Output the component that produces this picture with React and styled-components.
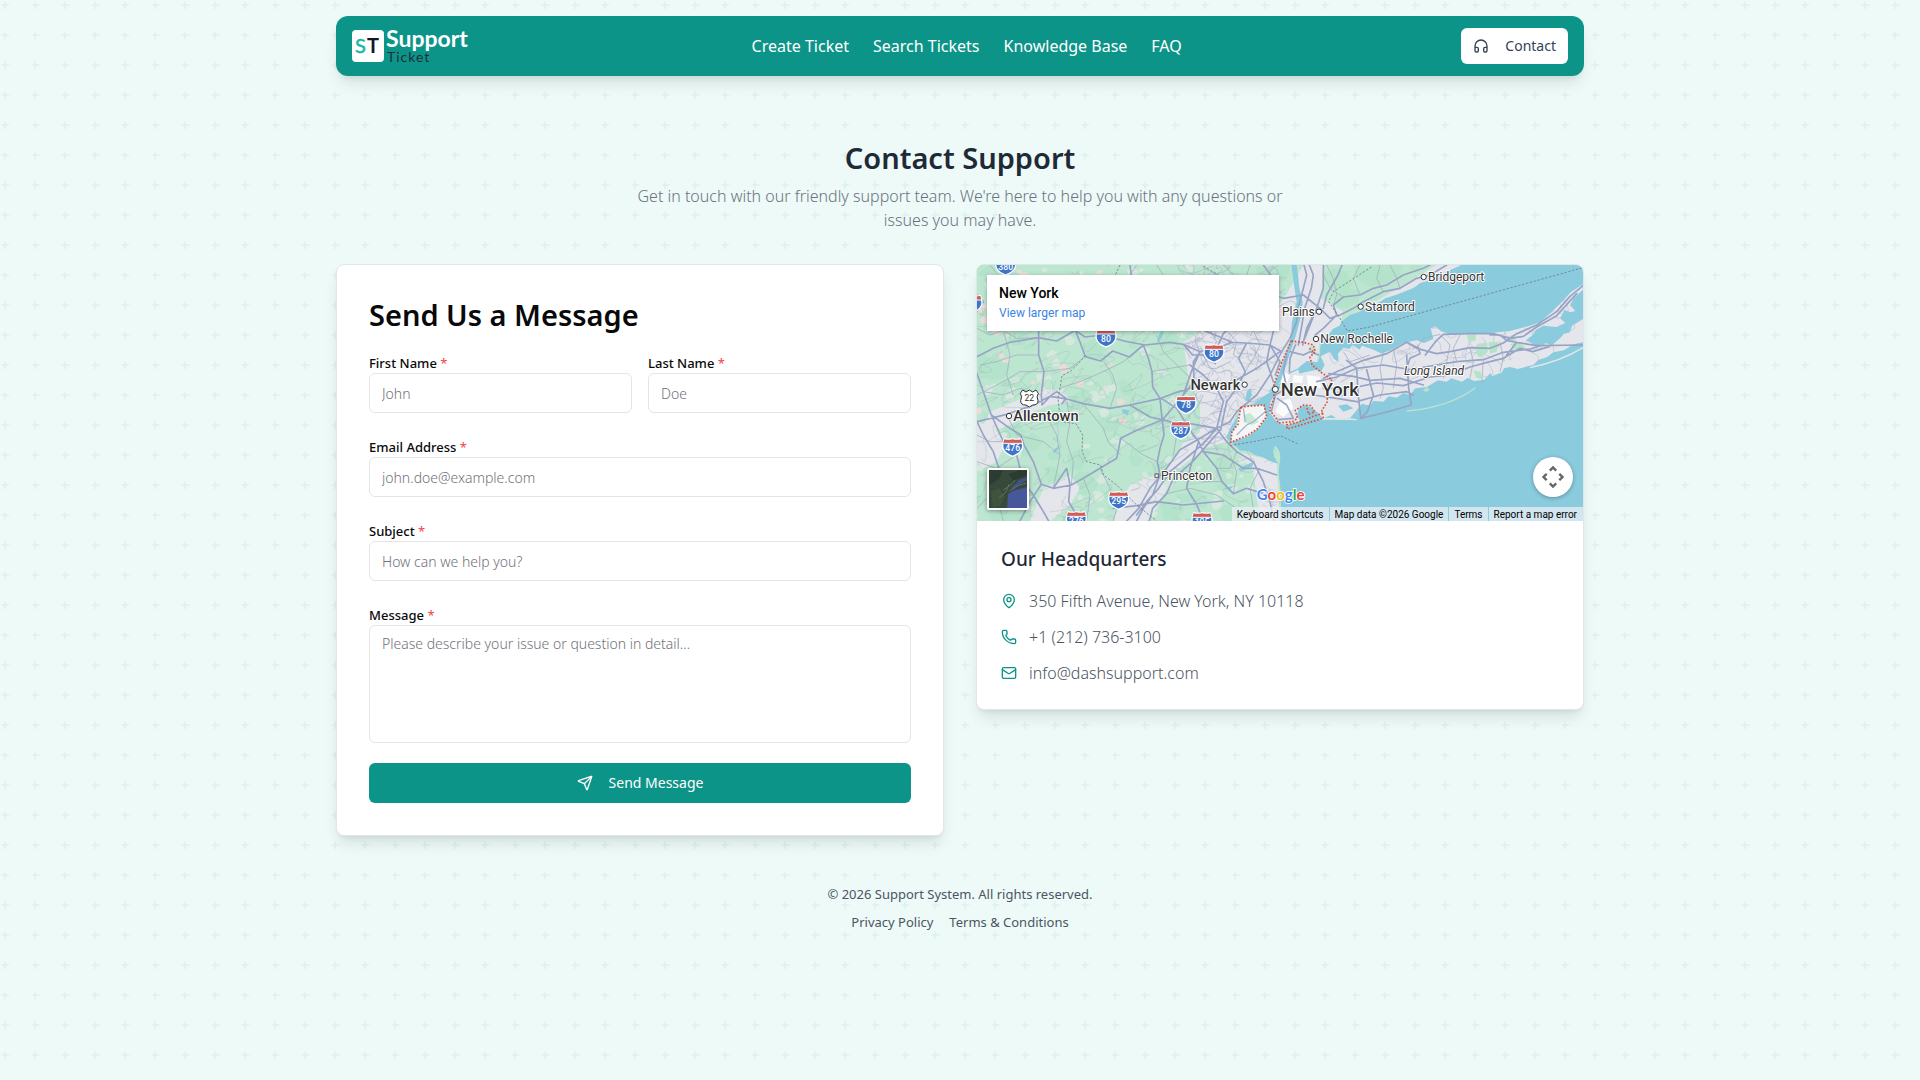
import styled, { createGlobalStyle } from "styled-components"
import { Headphones, Mail, MapPin, Phone, Send } from "lucide-react"

const plus = encodeURIComponent(
  `<svg xmlns="http://www.w3.org/2000/svg" width="30" height="30"><path d="M1 5h9M5 1v9" stroke="#0d9488" stroke-opacity="0.03" stroke-width="2"/><path d="M3 5h5M5 3v5" stroke="#0d9488" stroke-opacity="0.03" stroke-width="2"/></svg>`
)

const GlobalStyle = createGlobalStyle`
    *, *::before, *::after {
        box-sizing: border-box;
    }

    body {
        margin: 0;
        min-height: 100vh;
        font-family: "Noto Sans", "Open Sans", sans-serif;
        font-size: 16px;
        line-height: 24px;
        color: #09090b;
        background: #edfaf8 url("data:image/svg+xml,${plus}");
    }

    h1, h2, h3, p {
        margin: 0;
    }

    a {
        color: inherit;
        text-decoration: none;
    }

    button, input, textarea {
        font: inherit;
    }
`

const Container = styled.div`
    max-width: 1280px;
    margin: 0 auto;
    padding: 16px;
`

const Header = styled.header`
    display: flex;
    align-items: center;
    justify-content: space-between;
    height: 60px;
    padding: 0 16px;
    border-radius: 12px;
    background-color: #0d9488;
    box-shadow: 0 10px 15px -3px rgba(0, 0, 0, 0.1), 0 4px 6px -4px rgba(0, 0, 0, 0.1);
`

const Logo = styled.a`
    display: flex;

    svg {
        overflow: visible;
    }
`

const Nav = styled.nav`
    display: flex;
    gap: 24px;
    color: #fff;
`

const ContactButton = styled.button`
    display: flex;
    align-items: center;
    gap: 16px;
    height: 36px;
    padding: 0 12px;
    border: 0;
    border-radius: 6px;
    background-color: #fff;
    color: #334155;
    font-size: 14px;
    cursor: pointer;
`

const Intro = styled.section`
    max-width: 672px;
    margin: 64px auto 32px;
    text-align: center;
    color: #6b7280;
    font-weight: 300;
`

const PageTitle = styled.h1`
    margin-bottom: 8px;
    font-size: 29px;
    line-height: 36px;
    font-weight: 600;
    color: #1f2937;
`

const Columns = styled.main`
    display: grid;
    grid-template-columns: repeat(2, minmax(0, 1fr));
    align-items: start;
    gap: 32px;
`

const Card = styled.section`
    overflow: hidden;
    border: 1px solid #e0e7e9;
    border-radius: 8px;
    background-color: #fff;
    box-shadow: 0 10px 15px -3px rgba(0, 0, 0, 0.1), 0 4px 6px -4px rgba(0, 0, 0, 0.1);
`

const Form = styled.form`
    display: grid;
    grid-template-columns: repeat(2, minmax(0, 1fr));
    gap: 24px 16px;
    padding: 32px;
`

const FormTitle = styled.h2`
    grid-column: 1 / -1;
    margin-bottom: -4px;
    font-size: 29px;
    line-height: 36px;
    font-weight: 600;
`

const Field = styled.div`
    grid-column: ${props => props.$wide && "1 / -1"};
    display: flex;
    flex-direction: column;
    font-size: 14px;
    line-height: 20px;
`

const Label = styled.label`
    font-size: 13px;
    font-weight: 500;
`

const Required = styled.span`
    font-weight: 400;
    color: #ef4444;
`

const Input = styled.input`
    width: 100%;
    height: ${props => props.as === "textarea" ? "118px" : "40px"};
    padding: 8px 12px;
    border: 1px solid #e4e4e7;
    border-radius: 6px;
    background-color: #fff;
    resize: none;

    &::placeholder {
        color: #71717a;
        font-weight: 300;
        opacity: 1;
    }
`

const SubmitButton = styled.button`
    grid-column: 1 / -1;
    display: flex;
    align-items: center;
    justify-content: center;
    gap: 16px;
    height: 40px;
    margin-top: -4px;
    border: 0;
    border-radius: 6px;
    background-color: #0d9488;
    color: #fff;
    font-size: 14px;
    cursor: pointer;
`

const MapFrame = styled.div`
    position: relative;
    height: 256px;
    overflow: hidden;
    font-family: Roboto, sans-serif;
`

const MapDrawing = styled.svg`
    display: block;
    width: 100%;
    height: 100%;
`

const PlaceCard = styled.div`
    position: absolute;
    top: 10px;
    left: 10px;
    width: 292px;
    padding: 8px 12px;
    background-color: #fff;
    box-shadow: 0 1px 4px rgba(0, 0, 0, 0.3);
    font-size: 14px;
    font-weight: 500;
    line-height: 20px;
    color: #000;
`

const LargerMapLink = styled.a`
    display: block;
    font-size: 12px;
    font-weight: 400;
    color: #3a84df;
`

const SatelliteButton = styled.button`
    position: absolute;
    bottom: 11px;
    left: 10px;
    width: 42px;
    height: 42px;
    padding: 0;
    border: 2px solid #fff;
    border-radius: 2px;
    box-shadow: 0 1px 4px rgba(0, 0, 0, 0.4);
    overflow: hidden;
    cursor: pointer;
`

const CameraButton = styled.button`
    position: absolute;
    right: 10px;
    bottom: 24px;
    display: flex;
    align-items: center;
    justify-content: center;
    width: 40px;
    height: 40px;
    padding: 0;
    border: 0;
    border-radius: 50%;
    background-color: #fff;
    box-shadow: 0 1px 4px rgba(0, 0, 0, 0.3);
    cursor: pointer;
`

const Attribution = styled.div`
    position: absolute;
    right: 0;
    bottom: 0;
    display: flex;
    font-size: 10px;
    line-height: 12px;
    color: #000;
`

const AttributionItem = styled.a`
    padding: 2px 5px 0 5px;
    background-color: rgba(235, 239, 245, 0.75);

    & + & {
        margin-left: 1px;
    }

    &:last-child {
        padding-right: 6px;
    }
`

const Office = styled.div`
    padding: 24px;
`

const OfficeTitle = styled.h3`
    margin-bottom: 16px;
    font-size: 19px;
    line-height: 28px;
    font-weight: 500;
    color: #1f2937;
`

const OfficeList = styled.address`
    display: flex;
    flex-direction: column;
    gap: 12px;
    font-style: normal;
    font-weight: 300;
    color: #4b5563;
`

const OfficeRow = styled.div`
    display: flex;
    align-items: center;
    gap: 12px;

    svg {
        color: #0d9488;
    }
`

const Footer = styled.footer`
    display: flex;
    flex-direction: column;
    align-items: center;
    gap: 8px;
    margin-top: 48px;
    font-size: 13px;
    line-height: 20px;
    color: #4b5563;
`

const FooterLinks = styled.div`
    display: flex;
    gap: 16px;
`

const mainland =
  "M0 0H1470V34L1440 46 1412 62 1380 76 1350 84 1330 100 1300 112 1270 122 1245 130 1222 146 1190 158 1168 172 1140 180 1118 198 1108 212 1088 222 1076 240 1062 252 1052 272 1050 300 1044 322 1010 318 985 340 960 350 940 372 918 402 900 412 872 430 850 448 818 452 800 490 780 520 768 548 790 566 810 586 836 588 856 600 880 606 898 618 924 626 912 606 908 580 920 590 930 620 926 650 932 700 934 760 925 820H0Z"
const longIsland =
  "M897 470L902 438 926 404 944 378 958 356 984 344 1012 350 1040 344 1052 352 1064 330 1052 304 1080 290 1092 312 1106 320 1104 296 1120 278 1138 282 1148 270 1168 284 1176 272 1210 284 1236 296 1268 282 1300 264 1340 256 1362 264 1390 252 1382 220 1396 214 1412 228 1440 238 1500 234 1560 234 1620 228 1680 212 1712 200 1746 170 1776 140 1802 112 1839 88V104L1812 128 1800 150 1816 168 1800 172 1784 164 1770 190 1786 204 1760 216 1720 212 1698 224 1688 240 1668 256 1700 274 1730 264 1744 272 1770 250 1782 236 1800 232 1806 212 1839 192V262L1810 268 1782 286 1750 292 1732 306 1706 314 1690 330 1672 334 1644 342 1620 336 1602 340 1596 352 1566 364 1562 354 1542 374 1512 378 1494 368 1476 380 1444 370 1430 380 1404 376 1370 396 1336 400 1320 420 1300 414 1280 428 1256 424 1240 440 1210 438 1200 452 1176 446 1156 470 1140 490 1106 494 1084 480 1060 490 1040 470 1010 450 990 456 980 480 990 498 950 512 920 500Z"

// motorways and trunk roads
const highways = [
  "M21 305L70 280 120 262 205 248 260 258 316 226 345 246 400 240 462 258 525 270 600 262 640 268 690 290 740 280 786 262 830 264 900 270 935 290",
  "M316 226L332 266 346 305 392 318 428 288 478 306 520 270 534 306 546 350 548 396 570 430 574 470 582 540 570 580 562 620 570 660 548 720 520 760 500 798",
  "M21 356L40 410 64 480 100 560 140 600 160 680 190 720 220 770 236 798",
  "M21 500L110 478 190 450 240 424 290 432 340 446 420 460 480 450 572 430 620 412 672 396 720 390 790 380 860 340 930 290",
  "M206 226L206 300 222 350 214 420 216 450 240 424 260 410 288 430 276 446",
  "M480 450L540 486 600 500 660 506 740 520 780 500 800 470 860 420 900 360 935 290",
  "M64 480L120 520 152 540 162 570 190 620 214 688 250 700 304 690 340 670 390 640 440 610 452 550 500 526 578 494 640 420 664 350 690 290",
  "M740 520L700 566 660 600 600 650 566 700 530 740 500 780",
  "M752 524L720 560 668 620 610 670 590 716 548 760 538 798",
  "M740 520L680 556 630 584 590 640 540 700 506 760 470 798",
  "M574 430L620 460 670 540 686 560 700 590 740 640 756 680 790 716 830 700 880 716",
  "M740 520L770 560 800 590 850 620 880 680 900 740 912 798",
  "M686 560L660 640 650 700 680 748 700 798",
  "M660 330L700 360 740 400 760 440 740 520",
  "M690 290L670 320 672 380 640 420",
  "M740 280L760 236 770 226",
  "M830 264L806 310 826 350 800 400 770 440 752 524",
  "M786 262L730 238 700 226",
  "M880 30L902 60 910 120 940 130 1000 120 1050 160 1080 190",
  "M935 290L960 250 980 200 984 160 1000 100 1010 60 1002 30",
  "M900 270L890 320 910 380",
  "M910 230L900 270 930 320 916 360",
  "M1004 250L1020 210 1040 160 1060 100 1060 30",
  "M985 270L994 220 1004 160 1024 100 1030 60 1018 30",
  "M998 270L1010 220 1030 180 1050 160",
  "M1080 190L1110 180 1150 160 1180 140 1240 110 1290 100 1340 70 1380 60 1430 30",
  "M1036 240L1060 220 1100 180 1090 150 1120 126 1170 120 1210 100 1250 90 1300 60 1360 40 1380 30",
  "M1116 30L1104 60 1070 120 1060 160",
  "M950 300L940 350 950 400 916 420 904 470",
  "M960 290L1000 300 1020 290 1046 300",
  "M976 270L960 310 958 350",
  "M1060 370L1100 350 1180 316 1250 296 1310 262 1340 280 1400 296 1440 290 1500 278 1560 280 1600 264 1640 236 1700 210 1760 170 1800 124 1839 92",
  "M1040 380L1100 366 1160 340 1240 330 1320 344 1400 330 1460 320 1540 314 1600 292 1680 282 1720 270",
  "M1060 400L1140 400 1220 384 1300 392 1380 366 1440 360 1500 336 1560 320 1600 310 1650 280 1688 290 1740 274",
  "M1030 420L1100 430 1160 440 1230 420 1310 410 1330 420",
  "M1076 356L1150 364 1200 376 1290 370 1360 390",
  "M1190 344L1210 420 1192 470 1172 490 1240 474 1324 450 1316 400 1310 300",
  "M1130 316L1160 340 1164 410 1172 490",
  "M1310 262L1346 280 1350 296 1320 310 1310 340",
  "M1366 300L1400 256 1420 238 1500 236",
  "M1560 240L1590 240 1610 256 1640 262 1700 272 1839 270",
  "M1500 236L1570 236 1620 250 1660 244 1700 216 1760 182 1820 116",
  "M1640 262L1610 300",
  "M922 430L950 450 970 490 924 494",
  "M21 500L40 540 70 590 90 650 100 690",
  "M214 688L180 740 150 798",
  "M250 700L290 640 300 690 296 740 330 798",
  "M700 590L760 600 820 640 860 640 920 660",
  "M21 120L40 140 20 170",
  "M480 30L484 60",
  "M640 268L668 300 700 300 736 326",
  "M430 760L500 752 560 740 640 750 700 744 760 738",
]

// secondary roads
const roads = [
  "M21 220L60 240 100 226 140 250 206 248",
  "M30 330L80 320 140 300 206 300",
  "M21 420L60 400 100 380 150 350 222 350 300 340 346 305",
  "M40 410L100 420 150 400 214 420",
  "M266 400L330 380 400 350 460 320 478 306",
  "M290 432L300 500 290 560 310 620 304 690",
  "M340 446L400 520 414 560 452 600",
  "M222 470L260 540 270 600 250 700",
  "M110 478L140 540 220 560 270 600",
  "M100 560L60 560 21 540",
  "M140 600L80 640 21 620",
  "M160 680L90 690 40 740 21 760",
  "M190 720L130 720 90 760 100 798",
  "M420 460L440 400 428 360 400 318",
  "M60 30L100 80 160 120",
  "M100 226L120 300 110 360 130 420",
  "M500 30L480 60 M560 30L580 60",
  "M452 550L520 600 562 620",
  "M390 640L420 700 440 760 430 798",
  "M340 670L360 720 350 798",
  "M570 660L640 650 700 680 756 680",
  "M590 716L660 700 740 720 800 760",
  "M546 350L600 340 660 330",
  "M560 240L580 290 620 330 672 380",
  "M600 500L620 540 610 600",
  "M780 600L800 650 790 716",
  "M800 590L780 640 740 640",
  "M870 640L840 700 850 760 830 798",
  "M1070 30L1090 70 1100 120 1090 150",
  "M1170 30L1150 70 1170 120",
  "M1230 30L1220 70 1240 110",
  "M1260 30L1280 70 1290 100",
  "M1120 126L1080 100 1060 60",
  "M1340 280L1360 250 1410 238 1440 270 1430 320 1420 370",
  "M1460 320L1450 280 1470 240",
  "M1500 278L1510 320 1500 370",
  "M1540 314L1536 370 1540 384",
  "M1590 260L1600 310 1590 350",
  "M1240 296L1230 340 1240 400 1230 430",
  "M1120 290L1140 320 1200 300",
  "M1270 282L1280 330 1270 400",
  "M760 30L790 60M840 30L830 60",
  "M700 300L720 340 740 340 780 320",
  "M700 420L680 460 640 500",
  "M720 226L740 260 720 300 700 330",
  "M770 226L800 260 790 300 806 310",
  "M850 226L870 270 850 310 826 350",
]

const parks = [
  "M1055 60L1090 40 1130 50 1150 90 1120 110 1080 100Z",
  "M1090 120L1130 96 1170 108 1166 140 1130 160 1098 156Z",
  "M1150 30H1300L1290 60 1250 84 1200 96 1160 70Z",
  "M1318 30H1360L1340 50 1320 44Z",
  "M1490 240L1516 236 1518 256 1496 260Z",
  "M1520 270L1550 262 1554 290 1530 308 1518 296Z",
  "M1556 262L1586 260 1580 290 1560 296Z",
  "M1620 268L1650 262 1668 280 1640 290Z",
  "M1610 250L1630 246 1640 256 1616 262Z",
  "M1510 346L1532 350 1536 372 1518 368Z",
  "M1370 396L1380 404 1370 412 1358 406Z",
  "M1590 312L1606 308 1604 322Z",
  "M1020 274L1036 278 1032 296 1018 290Z",
]

const urban = [
  "M640 262L700 226 760 200 900 190 960 100 1000 30 1060 30 1054 130 1120 170 1110 215 1050 250 1040 330 960 350 900 420 800 470 770 560 700 580 640 620 600 660 590 640 640 570 690 530 690 440 660 400 650 330Z",
  "M180 420L240 400 290 420 300 440 240 450 190 470 120 510 60 530 40 510 60 470Z",
  "M21 500L70 520 110 560 80 620 40 640 21 620Z",
  "M480 690L560 660 590 700 560 760 530 798H430L450 750Z",
  "M1110 190L1200 150 1290 96 1350 60 1400 30H1470L1350 90Z",
  "M640 560L700 545 720 570 640 630 600 660Z",
  "M800 590L920 620 930 798H870L850 650Z",
  "M220 700L300 660 330 700 300 750 240 798H180Z",
]

const waters = [
  "M936 30H964L972 90 980 140 966 200 962 250 946 300 936 330 926 360 910 390 896 410 916 408 936 370 958 300 978 240 994 180 998 140 988 100 984 60 980 30Z",
  "M570 232L584 226 574 250 560 264Z",
  "M456 462L478 466 474 480 458 474Z",
  "M830 410L842 400 846 420 836 440 826 436Z",
  "M250 586L270 570 266 580 252 596Z",
  "M984 340L1000 326 1030 336 1010 350 988 356Z",
  "M1100 410L1122 404 1130 420 1106 426Z",
  "M1104 452L1130 448 1150 460 1120 470Z",
  "M806 640L850 620 846 634 812 650Z",
  "M760 700L790 692 780 704Z",
]

const shields = [
  { x: 107, y: 32, n: "380" },
  { x: 6, y: 146 },
  { x: 408, y: 248, n: "80" },
  { x: 732, y: 294, n: "80" },
  { x: 648, y: 448, n: "78" },
  { x: 632, y: 524, n: "287" },
  { x: 128, y: 576, n: "476" },
  { x: 446, y: 735, n: "295" },
  { x: 319, y: 795, n: "276" },
  { x: 696, y: 798, n: "195" },
]

const places = [
  { x: 1361, y: 66, name: "Bridgeport" },
  { x: 1172, y: 155, name: "Stamford" },
  { x: 1047, y: 170, name: "Plains", before: true },
  { x: 1038, y: 252, name: "New Rochelle" },
  { x: 560, y: 662, name: "Princeton", small: true },
  { x: 824, y: 389, name: "Newark", before: true, size: 44 },
  { x: 117, y: 483, name: "Allentown", size: 44 },
  { x: 916, y: 403, name: "New York", size: 55 },
]

// small repeatable generator for the patches and lanes that fill the land
const scatter = (count, seed) => {
  let s = seed
  const next = () => {
    s = (s * 16807) % 2147483647
    return s / 2147483647
  }
  return Array.from({ length: count }, () => [next(), next(), next(), next(), next()])
}

const patch = ([a, b, c, d, e], w, h, size) => {
  const x = a * w
  const y = 30 + b * h
  const r = size * (0.4 + c)
  return `M${x} ${y}l${r} ${-r * d}l${r * 0.8} ${r * e}l${-r * 0.4} ${r * 0.8}l${-r} ${r * 0.1}z`
}

const lane = ([a, b, c, d, e], w, h, left = 0) => {
  const x = left + a * w
  const y = 30 + b * h
  return `M${x} ${y}q${c * 80 - 40} ${d * 60 - 30} ${e * 120 - 60} ${c * 90 - 45}t${d * 90 - 45} ${e * 70 - 35}`
}

const clearings = scatter(130, 77).map(v => patch(v, 880, 768, 15))
const towns = scatter(36, 903).map(v => patch(v, 460, 500, 13))
const woods = scatter(90, 41).map(v => patch(v, 900, 768, 32))
const lanes = scatter(200, 1234).map(v => lane(v, 1000, 768))
const cityLanes = scatter(90, 555).map(v => lane(v, 260, 560, 640))
const islandLanes = scatter(90, 88).map(v => lane(v, 700, 300, 1060))

const Shield = ({ x, y, n }) => (
  <g transform={`translate(${x} ${y})`}>
    <path d="M-25 -24Q-13 -21 0 -24Q13 -21 25 -24Q33 -6 28 6Q22 20 0 28Q-22 20 -28 6Q-33 -6 -25 -24Z" fill="#3d76c9" stroke="#fff" strokeWidth="4" />
    <path d="M-25 -23Q-13 -20 0 -23Q13 -20 25 -23L28 -12H-28Z" fill="#d25b58" />
    <path d="M-28 -11H28" stroke="#fff" strokeWidth="3" />
    {n && <text y="12" textAnchor="middle" fontSize="26" fontWeight="500" fill="#fff">{n}</text>}
  </g>
)

const Place = ({ x, y, name, before, small, size = 36 }) => (
  <g>
    {small
      ? <rect x={x - 5} y={y - 5} width="10" height="10" fill="#fff" stroke="#555" strokeWidth="3" />
      : <circle cx={x} cy={y} r={size > 50 ? 9 : 8} fill="#fff" stroke="#333" strokeWidth="3" />}
    <text
      x={before ? x - 13 : x + (size > 50 ? 16 : 13)}
      y={y + size * 0.35}
      textAnchor={before ? "end" : "start"}
      fontSize={size}
      fontWeight={size > 36 ? 500 : 400}
      fill="#333"
      stroke="#fff"
      strokeWidth="6"
      strokeLinejoin="round"
      paintOrder="stroke"
    >
      {name}
    </text>
  </g>
)

const MapView = () => (
  <MapDrawing viewBox="21 30 1818 768" preserveAspectRatio="xMidYMid slice" role="img" aria-label="Map of New York">
    <defs>
      <clipPath id="mainland"><path d={mainland} /></clipPath>
      <clipPath id="island"><path d={longIsland} /></clipPath>
    </defs>
    <rect width="1900" height="830" fill="#8acbde" />

    <g clipPath="url(#mainland)">
      <path d={mainland} fill="#bce6d0" />
      <path d={woods.join("")} fill="#a9dfc3" opacity="0.5" />
      <path d={clearings.join("")} fill="#e0eae6" opacity="0.7" />
      <path d={towns.join("")} fill="#ecdcd9" />
      <path d={urban.join("")} fill="#e5e6ec" />
      <path d={lanes.join("")} fill="none" stroke="#9db1b5" strokeWidth="1.6" opacity="0.6" />
      <path d={cityLanes.join("")} fill="none" stroke="#b2b8cf" strokeWidth="2" />
    </g>
    <path d={longIsland} fill="#e5e6ec" />
    <g clipPath="url(#island)">
      <path d={islandLanes.join("")} fill="none" stroke="#bcc1d3" strokeWidth="2" />
    </g>
    <path d={parks.join("")} fill="#b3e3c8" />
    <path d={waters.join("")} fill="#8acbde" />
    <path d="M810 455L880 450 890 486 866 520 830 545 785 560 784 536 800 510Z" fill="#f4f6f6" />
    <path d="M820 480L840 474 866 500 846 510 822 502Z" fill="#c4ead3" />
    <path d="M930 440L960 430 970 460 940 486 916 470ZM940 350L960 360 950 390 930 396ZM1010 360L1050 366 1052 400 1014 396ZM970 360L1000 364 996 384 968 382Z" fill="#fafbfb" />
    <path d="M1310 468Q1440 456 1516 398M1050 494L1150 492" fill="none" stroke="#bfe3cf" strokeWidth="4" />
    <path d="M1680 338Q1770 320 1839 278M1060 490L1160 494" fill="none" stroke="#e5e6ec" strokeWidth="4" />
    <path d="M914 576Q930 590 926 620" fill="none" stroke="#bce6d0" strokeWidth="8" />

    <path d={roads.join("")} fill="none" stroke="#a3b0c2" strokeWidth="2.4" strokeLinejoin="round" />
    <path d={highways.join("")} fill="none" stroke="#97a4c5" strokeWidth="5" strokeLinejoin="round" strokeLinecap="round" />
    <path d="M800 540L830 510 850 500 886 470M820 460L826 500" fill="none" stroke="#a9b2d2" strokeWidth="4" />

    <g fill="none" stroke="#6d7f86" strokeWidth="2.5" strokeDasharray="7 5">
      <path d="M450 30L436 60M700 34L745 60M346 300L330 320 300 350 276 362 270 400 264 430 268 470 276 500 318 506 338 540 336 590 350 620 392 630 400 660 440 690 500 750 560 798" />
      <path d="M1204 36L1090 110 1076 140 1110 190 1132 228 1200 216 1839 38" />
      <path d="M780 572L860 558 932 543 982 566" />
    </g>

    <g fill="none" stroke="#d9513f" strokeWidth="5" strokeDasharray="5 5">
      <path d="M964 258L1000 262 1030 270 1036 290 1020 306 1026 330 1056 354 1086 374 1070 400 1072 440 1056 466 1060 490 952 522 950 510 984 502 1030 484 1060 474M964 258L936 320 912 390 912 430 898 464 920 492 924 504 968 500 982 490 976 466 1000 450 1022 452 1034 470 1016 478 1010 456M1018 280L1034 294" />
      <path d="M812 456L882 450 890 484 862 522 830 542 782 562 786 530 804 508Z" />
    </g>

    {shields.map(s => <Shield key={`${s.x}-${s.y}`} {...s} />)}
    <g transform="translate(178 429)">
      <path d="M-20 -24L-10 -18 0 -24 10 -18 20 -24 27 -14Q20 -4 26 8Q26 22 10 21L0 27 -10 21Q-26 22 -26 8Q-20 -4 -27 -14Z" fill="#fff" stroke="#333" strokeWidth="3" />
      <text y="9" textAnchor="middle" fontSize="26" fill="#333">22</text>
    </g>

    {places.map(p => <Place key={p.name} {...p} />)}
    <text x="1302" y="360" fontSize="36" fontStyle="italic" fill="#333" stroke="#fff" strokeWidth="6" paintOrder="stroke">Long Island</text>

    <text x="860" y="734" fontFamily="Lato" fontSize="45" fontWeight="700" stroke="#fff" strokeWidth="5" paintOrder="stroke">
      <tspan fill="#4285f4">G</tspan>
      <tspan fill="#ea4335">o</tspan>
      <tspan fill="#fbbc05">o</tspan>
      <tspan fill="#4285f4">g</tspan>
      <tspan fill="#34a853">l</tspan>
      <tspan fill="#ea4335">e</tspan>
    </text>
  </MapDrawing>
)

const SatelliteThumb = () => (
  <svg width="38" height="38" viewBox="0 0 38 38" aria-hidden="true">
    <rect width="38" height="38" fill="#36493a" />
    <path d="M0 0h14l-4 9-10 6zM20 4l10-4h8v5l-14 6z" fill="#2b3d31" />
    <path d="M2 22l8-4 6 8-4 9-8 3z" fill="#42533d" />
    <path d="M18 38l1-14 4-3 15-4v21z" fill="#46579a" />
    <path d="M22 18l8-8 8-3v3l-8 5-5 5z" fill="#3f5289" />
    <path d="M14 20l8-5 4-5M10 28l7-6 3-8M20 21l8-5 9-3" fill="none" stroke="#5f6f60" strokeWidth="1" />
  </svg>
)

const CameraIcon = () => (
  <svg width="24" height="24" viewBox="0 0 24 24" fill="none" stroke="#666" strokeWidth="2.4" aria-hidden="true">
    <path d="M8.800 5.700L12 2.500l3.200 3.200M8.800 18.300L12 21.500l3.200-3.200M5.700 8.800L2.500 12l3.200 3.200M18.300 8.800L21.500 12l-3.200 3.200" />
  </svg>
)

const LogoDrawing = () => (
  <svg width="120" height="40" viewBox="0 0 120 40" fontFamily="Lato, sans-serif" role="img" aria-label="Support Ticket">
    <rect y="4" width="32" height="32" rx="4" fill="#fff" />
    <text x="3" y="27" fontSize="20" fill="#14b8a6" stroke="#14b8a6" strokeWidth="0.5">S</text>
    <text x="15" y="27" fontSize="20" fontWeight="700" fill="#0f172a">T</text>
    <text x="34" y="21" fontSize="23" fontWeight="700" fill="#fff">Support</text>
    <text x="35" y="36" fontSize="14" letterSpacing="1" fill="#1f2f3a">Ticket</text>
  </svg>
)

const FormField = ({ id, label, wide, ...rest }) => (
  <Field $wide={wide}>
    <Label htmlFor={id}>{label} <Required>*</Required></Label>
    <Input id={id} name={id} {...rest} />
  </Field>
)

const App = () => {
  return (
    <>
      <GlobalStyle />
      <Container>
        <Header>
          <Logo href="#home"><LogoDrawing /></Logo>
          <Nav>
            <a href="#create">Create Ticket</a>
            <a href="#search">Search Tickets</a>
            <a href="#knowledge">Knowledge Base</a>
            <a href="#faq">FAQ</a>
          </Nav>
          <ContactButton type="button">
            <Headphones size={16} />
            Contact
          </ContactButton>
        </Header>

        <Intro>
          <PageTitle>Contact Support</PageTitle>
          <p>Get in touch with our friendly support team. We're here to help you with any questions or issues you may have.</p>
        </Intro>

        <Columns>
          <Card>
            <Form onSubmit={e => e.preventDefault()}>
              <FormTitle>Send Us a Message</FormTitle>
              <FormField id="firstName" label="First Name" placeholder="John" />
              <FormField id="lastName" label="Last Name" placeholder="Doe" />
              <FormField id="email" type="email" label="Email Address" placeholder="john.doe@example.com" wide />
              <FormField id="subject" label="Subject" placeholder="How can we help you?" wide />
              <FormField id="message" as="textarea" label="Message" placeholder="Please describe your issue or question in detail..." wide />
              <SubmitButton type="submit">
                <Send size={16} />
                Send Message
              </SubmitButton>
            </Form>
          </Card>

          <Card>
            <MapFrame>
              <MapView />
              <PlaceCard>
                New York
                <LargerMapLink href="#map">View larger map</LargerMapLink>
              </PlaceCard>
              <SatelliteButton type="button" aria-label="Show satellite imagery">
                <SatelliteThumb />
              </SatelliteButton>
              <CameraButton type="button" aria-label="Map camera controls">
                <CameraIcon />
              </CameraButton>
              <Attribution>
                <AttributionItem href="#shortcuts">Keyboard shortcuts</AttributionItem>
                <AttributionItem as="span">Map data ©2026 Google</AttributionItem>
                <AttributionItem href="#map-terms">Terms</AttributionItem>
                <AttributionItem href="#report">Report a map error</AttributionItem>
              </Attribution>
            </MapFrame>
            <Office>
              <OfficeTitle>Our Headquarters</OfficeTitle>
              <OfficeList>
                <OfficeRow><MapPin size={16} />350 Fifth Avenue, New York, NY 10118</OfficeRow>
                <OfficeRow><Phone size={16} />+1 (212) 736-3100</OfficeRow>
                <OfficeRow><Mail size={16} />info@dashsupport.com</OfficeRow>
              </OfficeList>
            </Office>
          </Card>
        </Columns>

        <Footer>
          <p>© 2026 Support System. All rights reserved.</p>
          <FooterLinks>
            <a href="#privacy">Privacy Policy</a>
            <a href="#terms">Terms & Conditions</a>
          </FooterLinks>
        </Footer>
      </Container>
    </>
  )
}

export default App
